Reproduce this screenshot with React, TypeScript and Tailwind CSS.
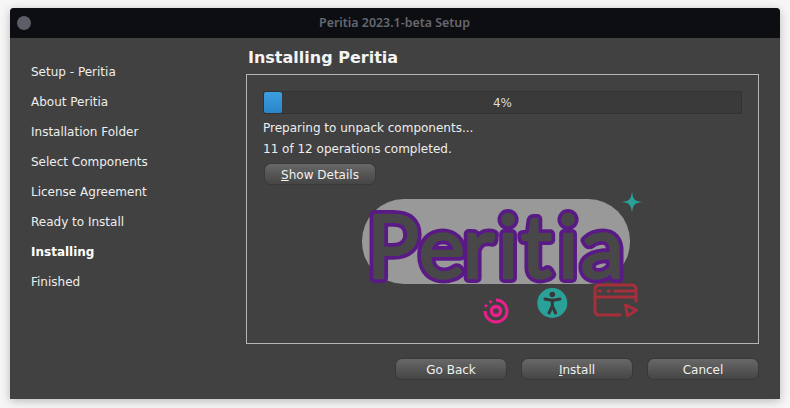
import React from "react";

const steps = ["Setup - Peritia","About Peritia","Installation Folder","Select Components","License Agreement","Ready to Install","Installing","Finished"];

function Btn({ children, className = "" }: { children: React.ReactNode; className?: string }) {
  return (
    <div className={"flex h-[20px] w-[110px] items-center justify-center rounded-[6px] bg-gradient-to-b from-[#686868] to-[#454545] pt-[2px] text-[#f0f0f0] shadow-[0_0_0_1px_#393939] " + className}>
      <span>{children}</span>
    </div>
  );
}

function Logo() {
  const t = { x: "11.5 63.5 107.5 142.5 165.5 202.5 225.5", y: 90, fontFamily: "Lato, sans-serif", fontWeight: 400, fontSize: 88, strokeLinejoin: "round" as const, strokeLinecap: "round" as const };
  return (
    <svg width="290" height="140" viewBox="0 0 290 140" className="block">
      <rect x="7" y="11" width="268" height="85" rx="42" fill="#999999" />
      <text {...t} fill="#5a1a85" stroke="#5a1a85" strokeWidth="10">Peritia</text>
      <text {...t} fill="#484848" stroke="#484848" strokeWidth="2.5">Peritia</text>
      <path d="M277 3 C278 11 279 13 287 14 C279 15 278 17 277 25 C276 17 275 15 267 14 C275 13 276 11 277 3Z" fill="#2aa198" />
      <g fill="none" stroke="#ec1e8c">
        <path d="M141 112 A11 11 0 1 1 130 123" strokeWidth="3" />
        <circle cx="141" cy="123" r="4.5" strokeWidth="3.4" />
      </g>
      <circle cx="135.7" cy="113.7" r="1.5" fill="#ec1e8c" />
      <circle cx="131" cy="117.7" r="1.5" fill="#ec1e8c" />
      <circle cx="197.3" cy="115" r="15" fill="#2aa198" />
      <g fill="none" stroke="#383838" strokeWidth="3" strokeLinecap="round" strokeLinejoin="round">
        <path d="M190 111 L197.3 112.5 L205 111" />
        <path d="M197.3 112 L197.3 118 L194 125 M197.3 118 L200.6 125" />
      </g>
      <circle cx="197.3" cy="106.5" r="2.8" fill="#383838" />
      <g fill="none" stroke="#a5303c" strokeWidth="3" strokeLinecap="round" strokeLinejoin="round">
        <path d="M281 113 V101 A4 4 0 0 0 277 97 H244 A4 4 0 0 0 240 101 V123 A4 4 0 0 0 244 127 H265" />
        <path d="M240 109 H281" />
        <path d="M270.5 117 L281.5 122 L272.5 128 Z" />
        <path d="M260 103 H279 M244 103 H245.5 M253 103 H254.5" />
      </g>
    </svg>
  );
}

export default function App() {
  return (
    <div className="flex h-[408px] w-[790px] items-start bg-[#f6f6f6] pl-[10px] pt-[8px] font-['DejaVu_Sans',sans-serif] text-[12px] text-[#eeeeee]">
      <div className="flex h-[391px] w-[770px] flex-col overflow-hidden rounded-t-[4px] bg-[#414141] shadow-[0_2px_10px_rgba(0,0,0,0.25)]">
        <div className="flex h-[30px] items-center bg-[#0d0e12] pl-[7px]">
          <div className="h-[14px] w-[14px] rounded-full bg-[#5c5d66]" />
          <div className="flex-1 pr-[22px] text-center font-['Noto_Sans',sans-serif] text-[12.4px] font-semibold text-[#65676f]">Peritia 2023.1-beta Setup</div>
        </div>
        <div className="flex flex-1">
          <div className="flex w-[236px] flex-col pl-[21px] pt-[19px]">
            {steps.map((s) => (
              <div key={s} className={"h-[30px] leading-[30px] " + (s === "Installing" ? "font-bold text-white" : "")}>{s}</div>
            ))}
          </div>
          <div className="flex flex-1 flex-col pr-[21px]">
            <div className="pl-[2px] pt-[9px] text-[16px] font-bold leading-[22px] text-[#f4f4f4]">Installing Peritia</div>
            <div className="mt-[5px] h-[270px] w-[513px] border border-[#b4b4b4] px-[16px] pt-[16px]">
              <div className="relative h-[23px] w-[479px] rounded-[2px] border border-[#333333] bg-[#3a3a3a]">
                <div className="h-[21px] w-[18px] rounded-[2px] bg-gradient-to-b from-[#3a9fe0] to-[#2b85c8]" />
                <div className="absolute inset-0 pt-px text-center leading-[21px] text-[#dddddd]">4%</div>
              </div>
              <div className="mt-[4px] h-[20px] leading-[20px]">Preparing to unpack components...</div>
              <div className="h-px" />
              <div className="h-[20px] leading-[20px]">11 of 12 operations completed.</div>
              <Btn className="ml-[2px] mt-[5px]"><u>S</u>how Details</Btn>
              <div className="ml-[92px] mt-[4px]"><Logo /></div>
            </div>
            <div className="mt-[15px] flex justify-end gap-[16px] pr-px">
              <Btn>Go Back</Btn>
              <Btn><u>I</u>nstall</Btn>
              <Btn>Cancel</Btn>
            </div>
          </div>
        </div>
      </div>
    </div>
  );
}
